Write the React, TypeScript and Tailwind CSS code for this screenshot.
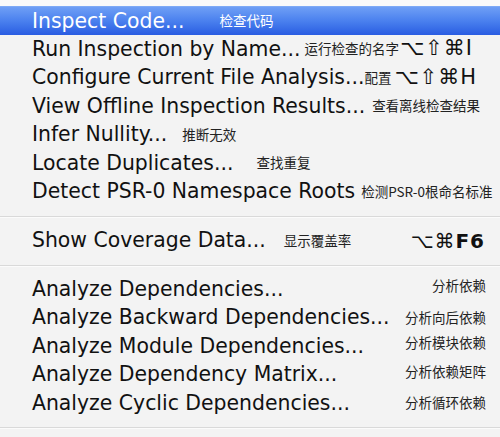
import React from "react";

interface Item {
  label: string;
  zh: string;
  zhClass: string;
  keys?: string;
  keysClass?: string;
  active?: boolean;
}

const inspectItems: Item[] = [
  { label: "Inspect Code...", zh: "检查代码", zhClass: "ml-[35px]", active: true },
  { label: "Run Inspection by Name...", zh: "运行检查的名字", zhClass: "ml-[4px]", keys: "⌥⇧⌘I", keysClass: "ml-[1px]" },
  { label: "Configure Current File Analysis...", zh: "配置", zhClass: "ml-0", keys: "⌥⇧⌘H", keysClass: "ml-[3px]" },
  { label: "View Offline Inspection Results...", zh: "查看离线检查结果", zhClass: "ml-[7px]" },
  { label: "Infer Nullity...", zh: "推断无效", zhClass: "ml-[15px]" },
  { label: "Locate Duplicates...", zh: "查找重复", zhClass: "ml-[23px]" },
  { label: "Detect PSR-0 Namespace Roots", zh: "检测PSR-0根命名标准", zhClass: "ml-[6px]" },
];

const analyzeItems = [
  { label: "Analyze Dependencies...", zh: "分析依赖", up: true },
  { label: "Analyze Backward Dependencies...", zh: "分析向后依赖" },
  { label: "Analyze Module Dependencies...", zh: "分析模块依赖", up: true },
  { label: "Analyze Dependency Matrix...", zh: "分析依赖矩阵", up: true },
  { label: "Analyze Cyclic Dependencies...", zh: "分析循环依赖" },
];

function Row({ item }: { item: Item }) {
  return (
    <div
      className={
        item.active
          ? "flex items-center h-[28.5px] pl-[32px] pr-[14px] bg-gradient-to-b from-[#6f9ff5] via-[#4a80ee] to-[#2a5ce2] border-t border-[#7eaaf6] text-white"
          : "flex items-center h-[28.5px] pl-[32px] pr-[14px] text-[#111]"
      }
    >
      <span className="text-[20.4px] leading-none whitespace-nowrap">{item.label}</span>
      <span
        className={
          "text-[13.5px] leading-none whitespace-nowrap [font-family:'Noto_Sans_CJK_SC',sans-serif] " +
          item.zhClass +
          (item.active ? " text-white" : " text-[#222]")
        }
      >
        {item.zh}
      </span>
      {item.keys && (
        <span className={"text-[21px] leading-none whitespace-nowrap tracking-[1px] " + item.keysClass}>
          {item.keys}
        </span>
      )}
    </div>
  );
}

function Separator() {
  return <div className="h-[2px] border-t border-[#d9d9d9] bg-[#fbfbfb]" />;
}

export default function App() {
  return (
    <div className="w-[500px] h-[437px] overflow-hidden bg-[#f3f3f3] [font-family:'DejaVu_Sans','Noto_Sans_CJK_SC',sans-serif]">
      <div className="h-[6px] bg-[#fafafa]" />
      {inspectItems.map((item) => (
        <Row key={item.label} item={item} />
      ))}
      <div className="h-[10px]" />
      <Separator />
      <div className="h-[9px]" />
      <div className="flex items-center h-[28px] pl-[32px] pr-[15px] text-[#111]">
        <span className="text-[20.4px] leading-none whitespace-nowrap">Show Coverage Data...</span>
        <span className="ml-[18px] text-[13.5px] leading-none text-[#222] [font-family:'Noto_Sans_CJK_SC',sans-serif]">
          显示覆盖率
        </span>
        <span className="ml-auto text-[20px] leading-none tracking-[1px]">
          ⌥⌘<span className="font-bold">F6</span>
        </span>
      </div>
      <div className="h-[10px]" />
      <Separator />
      <div className="h-[8px]" />
      {analyzeItems.map((item) => (
        <div key={item.label} className="flex items-center h-[28.5px] pl-[32px] pr-[14px] text-[#111]">
          <span className="text-[20.4px] leading-none whitespace-nowrap">{item.label}</span>
          <span
            className={
              item.up
                ? "ml-auto -mt-[6px] text-[13.5px] leading-none text-[#222] [font-family:'Noto_Sans_CJK_SC',sans-serif]"
                : "ml-auto text-[13.5px] leading-none text-[#222] [font-family:'Noto_Sans_CJK_SC',sans-serif]"
            }
          >
            {item.zh}
          </span>
        </div>
      ))}
      <div className="h-[10px]" />
      <Separator />
    </div>
  );
}
